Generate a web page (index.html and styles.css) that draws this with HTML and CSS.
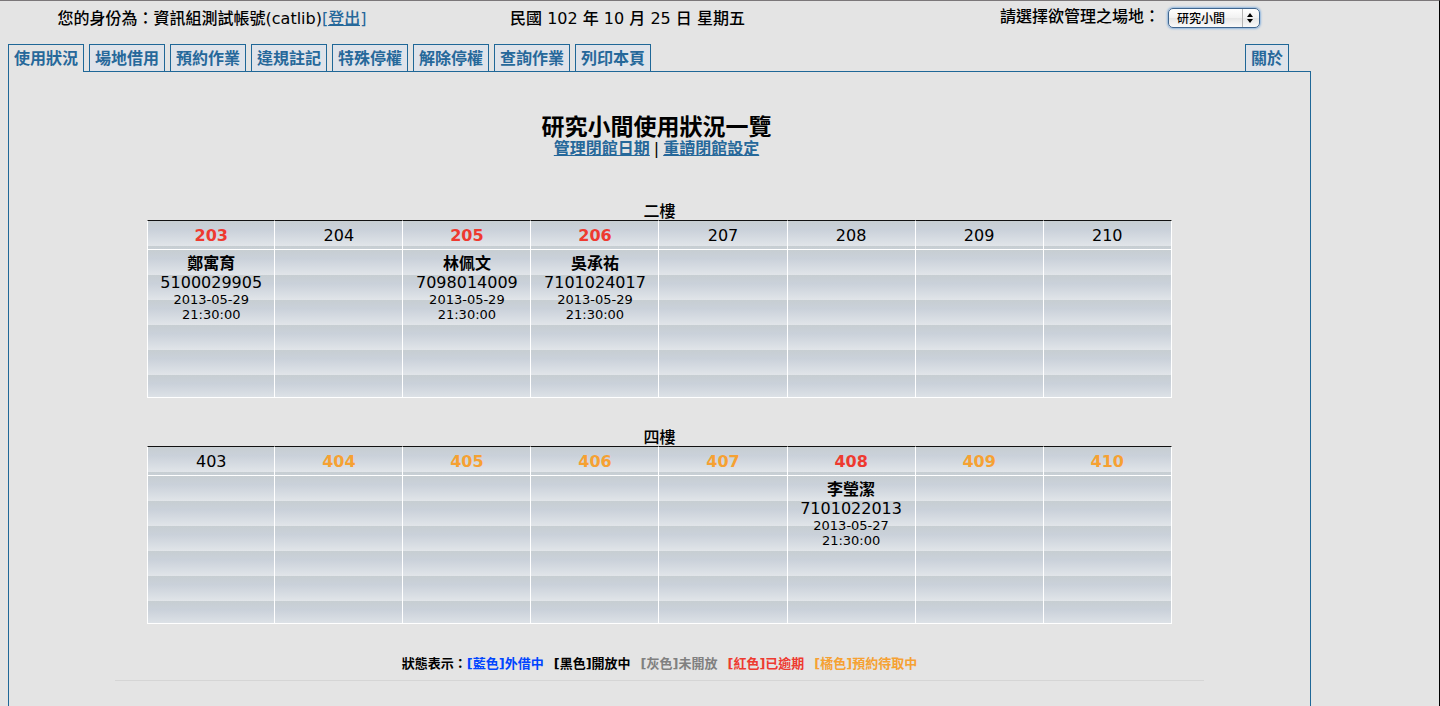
FILE: index.html
```html
<!DOCTYPE html>
<html lang="zh-Hant">
<head>
<meta charset="utf-8">
<title>研究小間使用狀況一覽</title>
<link rel="stylesheet" href="styles.css">
</head>
<body>
<div class="page">
  <header class="topbar">
    <div class="user">您的身份為：資訊組測試帳號(catlib)<a href="#logout">[登出]</a></div>
    <div class="today">民國 102 年 10 月 25 日 星期五</div>
    <div class="picker">
      <label for="place">請選擇欲管理之場地：</label>
      <span class="select-box">
        <select id="place"><option>研究小間</option></select>
        <svg class="select-arrows" width="6" height="10" viewBox="0 0 6 10" aria-hidden="true"><path d="M3 0 6 4H0ZM0 6H6L3 10Z"/></svg>
      </span>
    </div>
  </header>

  <div class="frame">
    <nav class="tabs">
      <a class="tab active" href="#status">使用狀況</a>
      <a class="tab" href="#borrow">場地借用</a>
      <a class="tab" href="#reserve">預約作業</a>
      <a class="tab" href="#violation">違規註記</a>
      <a class="tab" href="#suspend">特殊停權</a>
      <a class="tab" href="#restore">解除停權</a>
      <a class="tab" href="#query">查詢作業</a>
      <a class="tab" href="#print">列印本頁</a>
      <a class="tab about" href="#about">關於</a>
    </nav>

    <main class="panel">
      <div class="heading">
        <h1>研究小間使用狀況一覽</h1>
        <p class="actions"><a href="#closed">管理閉館日期</a><span>|</span><a href="#reload">重讀閉館設定</a></p>
      </div>

      <table class="rooms">
        <caption>二樓</caption>
        <thead>
          <tr>
            <th class="overdue">203</th><th>204</th><th class="overdue">205</th><th class="overdue">206</th>
            <th>207</th><th>208</th><th>209</th><th>210</th>
          </tr>
        </thead>
        <tbody>
          <tr>
            <td><div class="name">鄭寓育</div><div>5100029905</div><div class="time">2013-05-29<br>21:30:00</div></td>
            <td></td>
            <td><div class="name">林佩文</div><div>7098014009</div><div class="time">2013-05-29<br>21:30:00</div></td>
            <td><div class="name">吳承祐</div><div>7101024017</div><div class="time">2013-05-29<br>21:30:00</div></td>
            <td></td><td></td><td></td><td></td>
          </tr>
        </tbody>
      </table>

      <table class="rooms">
        <caption>四樓</caption>
        <thead>
          <tr>
            <th>403</th><th class="reserved">404</th><th class="reserved">405</th><th class="reserved">406</th>
            <th class="reserved">407</th><th class="overdue">408</th><th class="reserved">409</th><th class="reserved">410</th>
          </tr>
        </thead>
        <tbody>
          <tr>
            <td></td><td></td><td></td><td></td><td></td>
            <td><div class="name">李瑩潔</div><div>7101022013</div><div class="time">2013-05-27<br>21:30:00</div></td>
            <td></td><td></td>
          </tr>
        </tbody>
      </table>

      <div class="legend">
        <span class="legend-items">
          <span>狀態表示：<span class="lent">[藍色]外借中</span></span>
          <span>[黑色]開放中</span>
          <span class="closed">[灰色]未開放</span>
          <span class="overdue">[紅色]已逾期</span>
          <span class="reserved">[橘色]預約待取中</span>
        </span>
      </div>
      <hr class="rule">
    </main>
  </div>
</div>
</body>
</html>
```
FILE: styles.css
```css
* { box-sizing: border-box; }

body {
  margin: 0;
  background: #e4e4e4;
  color: #000;
  font: 16px/20px "DejaVu Sans", "Noto Sans CJK TC", sans-serif;
}

a { color: #26689a; font-weight: bold; }

.page {
  display: flex;
  flex-direction: column;
  min-height: 100vh;
  padding: 0 8px;
  border-top: 1px solid #7b7779;
  border-right: 1px solid #000;
}

.topbar {
  display: grid;
  grid-template-columns: 408fr 423fr 582fr;
  padding-right: 10px;
  height: 43px;
  text-align: center;
  font-weight: 500;
}

.user, .today { padding-top: 8px; }
.user a { font-weight: 500; }

.picker {
  display: flex;
  justify-content: center;
  align-items: flex-start;
  gap: 8px;
  padding-top: 6px;
}

.select-box { position: relative; display: flex; margin-top: 1px; }

.select-box select {
  appearance: none;
  width: 92px;
  height: 20px;
  padding: 0 20px 0 8px;
  border: 1px solid #3f668f;
  border-radius: 5px;
  background: linear-gradient(90deg, transparent 73px, #b5b5b5 73px, #b5b5b5 74px, transparent 74px),
    linear-gradient(#fff, #f1f1f1 50%, #e6e6e6 50%, #fafafa);
  box-shadow: 0 0 2px 1px #8fb5dd;
  color: #000;
  font: 500 12px/16px "Noto Sans CJK TC", sans-serif;
}

.select-arrows {
  position: absolute;
  top: 5px;
  right: 7px;
  pointer-events: none;
}

.frame {
  display: flex;
  flex: 1;
  flex-direction: column;
  width: 91.57%;
}

.tabs {
  display: flex;
  gap: 5px;
  padding-right: 22px;
}

.tab {
  height: 27px;
  padding: 0 5px;
  border: 1px solid #1f6797;
  border-bottom: 0;
  background: #dfe3ea;
  line-height: 27px;
  text-decoration: none;
  white-space: nowrap;
}

.tab.active {
  position: relative;
  height: 28px;
  margin-bottom: -1px;
  background: #e4e4e4;
}

.tab.about { margin-left: auto; }

.panel {
  flex: 1;
  padding-top: 44px;
  border: 1px solid #1f6797;
  border-bottom: 0;
}

.heading {
  padding-right: 6px;
  margin-bottom: 43px;
  text-align: center;
}

h1 {
  margin: 0;
  font-size: 23px;
  line-height: 23px;
}

.actions {
  display: flex;
  justify-content: center;
  gap: 4px;
  margin: 0;
  line-height: 20px;
}

.rooms {
  width: 78.75%;
  margin: 0 auto 30px;
  border-spacing: 0;
  table-layout: fixed;
  text-align: center;
}

.rooms caption { height: 18px; font-weight: 500; line-height: 20px; }

.rooms th, .rooms td {
  padding: 0;
  border-right: 1px solid #fff;
  border-bottom: 1px solid #fff;
  background: linear-gradient(#c7ced2, #cad1da 35%, #e1e5e9) 0 0 / 100% 25px;
}

.rooms th:first-child, .rooms td:first-child { border-left: 1px solid #fff; }

.rooms th {
  height: 30px;
  padding-top: 2px;
  border-top: 1px solid #111;
  font-weight: normal;
}

.rooms td {
  height: 148px;
  padding-top: 4px;
  line-height: 19px;
  vertical-align: top;
}

.name { font-weight: bold; }
.time { font-size: 13px; line-height: 15px; }

.rooms th.overdue, .rooms th.reserved { font-weight: bold; }
.overdue { color: #ee3a30; }
.reserved { color: #f6a132; }
.lent { color: #0045ff; }
.closed { color: #808080; }

.legend {
  font-size: 13px;
  font-weight: bold;
  line-height: 20px;
  text-align: center;
}

.legend-items { display: inline-flex; gap: 10px; }

.rule {
  width: 83.7%;
  margin: 6px auto 0;
  border: 0;
  border-top: 1px solid #d5d5d5;
}
```
